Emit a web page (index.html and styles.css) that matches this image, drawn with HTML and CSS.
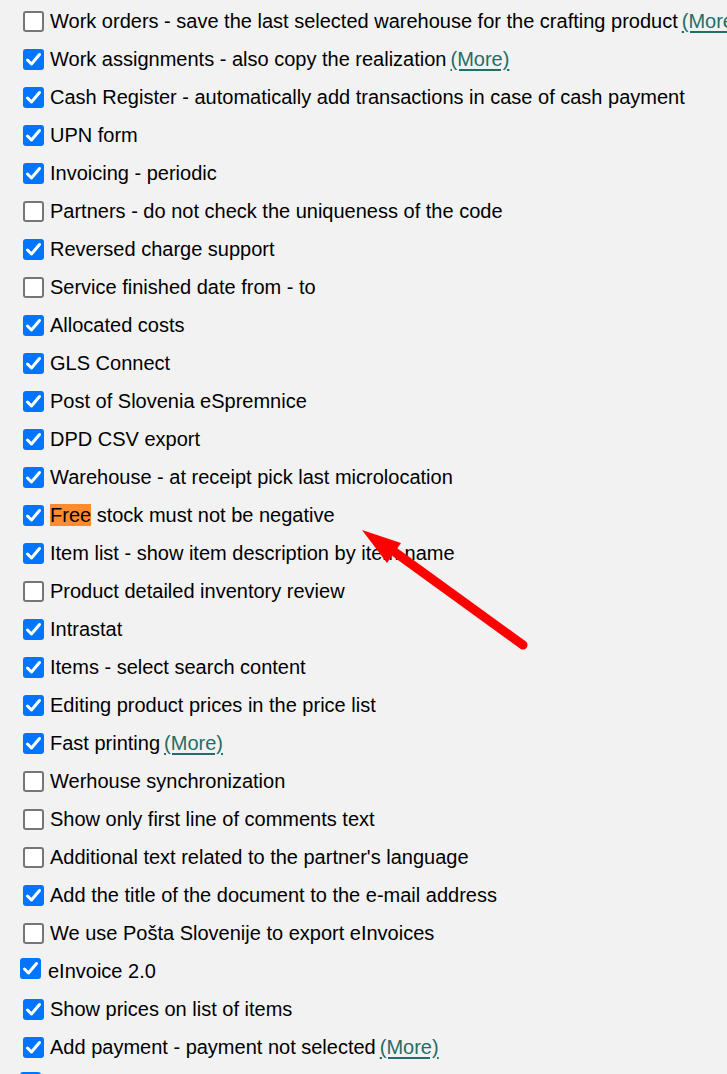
FILE: index.html
```html
<!DOCTYPE html>
<html>
<head>
<meta charset="utf-8">
<link rel="stylesheet" href="styles.css">
</head>
<body>
<div class="list">
  <div class="row"><span class="cb"></span><span class="label">Work orders - save the last selected warehouse for the crafting product</span><a class="more">(More)</a></div>
  <div class="row"><span class="cb on"></span><span class="label">Work assignments - also copy the realization</span><a class="more">(More)</a></div>
  <div class="row"><span class="cb on"></span><span class="label">Cash Register - automatically add transactions in case of cash payment</span></div>
  <div class="row"><span class="cb on"></span><span class="label">UPN form</span></div>
  <div class="row"><span class="cb on"></span><span class="label">Invoicing - periodic</span></div>
  <div class="row"><span class="cb"></span><span class="label">Partners - do not check the uniqueness of the code</span></div>
  <div class="row"><span class="cb on"></span><span class="label">Reversed charge support</span></div>
  <div class="row"><span class="cb"></span><span class="label">Service finished date from - to</span></div>
  <div class="row"><span class="cb on"></span><span class="label">Allocated costs</span></div>
  <div class="row"><span class="cb on"></span><span class="label">GLS Connect</span></div>
  <div class="row"><span class="cb on"></span><span class="label">Post of Slovenia eSpremnice</span></div>
  <div class="row"><span class="cb on"></span><span class="label">DPD CSV export</span></div>
  <div class="row"><span class="cb on"></span><span class="label">Warehouse - at receipt pick last microlocation</span></div>
  <div class="row"><span class="cb on"></span><span class="label"><mark class="hl">Free</mark> stock must not be negative</span></div>
  <div class="row"><span class="cb on"></span><span class="label">Item list - show item description by item name</span></div>
  <div class="row"><span class="cb"></span><span class="label">Product detailed inventory review</span></div>
  <div class="row"><span class="cb on"></span><span class="label">Intrastat</span></div>
  <div class="row"><span class="cb on"></span><span class="label">Items - select search content</span></div>
  <div class="row"><span class="cb on"></span><span class="label">Editing product prices in the price list</span></div>
  <div class="row"><span class="cb on"></span><span class="label">Fast printing</span><a class="more">(More)</a></div>
  <div class="row"><span class="cb"></span><span class="label">Werhouse synchronization</span></div>
  <div class="row"><span class="cb"></span><span class="label">Show only first line of comments text</span></div>
  <div class="row"><span class="cb"></span><span class="label">Additional text related to the partner's language</span></div>
  <div class="row"><span class="cb on"></span><span class="label">Add the title of the document to the e-mail address</span></div>
  <div class="row"><span class="cb"></span><span class="label">We use Pošta Slovenije to export eInvoices</span></div>
  <div class="row alt"><span class="cb on"></span><span class="label">eInvoice 2.0</span></div>
  <div class="row"><span class="cb on"></span><span class="label">Show prices on list of items</span></div>
  <div class="row"><span class="cb on"></span><span class="label">Add payment - payment not selected</span><a class="more">(More)</a></div>
  <div class="row alt"><span class="cb on"></span></div>
</div>
<svg class="arrow" width="727" height="1074" viewBox="0 0 727 1074">
  <line x1="523" y1="645" x2="385" y2="545" stroke="#ff0000" stroke-width="9" stroke-linecap="round"/>
  <polygon points="362,530 401,543 387,563" fill="#ff0000"/>
</svg>
</body>
</html>
```
FILE: styles.css
```css
html, body {
  margin: 0;
  padding: 0;
  background: #f2f2f2;
  overflow: hidden;
}
body {
  width: 727px;
  height: 1074px;
  font-family: "Liberation Sans", Arial, sans-serif;
  font-size: 20px;
  color: #000;
}
.list {
  padding-top: 2px;
  padding-left: 23px;
}
.row {
  height: 38px;
  display: flex;
  align-items: center;
  white-space: nowrap;
}
.row.alt {
  margin-left: -3px;
}
.row.alt .cb {
  margin-top: -6px;
  margin-right: 7px;
}
.cb {
  width: 21px;
  height: 21px;
  box-sizing: border-box;
  border: 2px solid #767676;
  border-radius: 3px;
  background: #fff;
  margin-right: 6px;
  flex: none;
  position: relative;
}
.cb.on {
  border: none;
  background: #0075ff url("data:image/svg+xml;utf8,<svg xmlns='http://www.w3.org/2000/svg' viewBox='0 0 21 21'><path d='M4.5 11 L8.5 15 L16.5 5.5' fill='none' stroke='white' stroke-width='3' stroke-linecap='round' stroke-linejoin='round'/></svg>") center/21px 21px no-repeat;
}
.label {
  line-height: 23px;
}
.hl {
  background: #ff8b2e;
  color: #000;
  padding: 0;
}
.more {
  margin-left: 4px;
  color: #1f6e68;
  text-decoration: underline;
  text-decoration-thickness: 2px;
  text-underline-offset: 3px;
  cursor: pointer;
}
.arrow {
  position: absolute;
  left: 0;
  top: 0;
  pointer-events: none;
}
```
